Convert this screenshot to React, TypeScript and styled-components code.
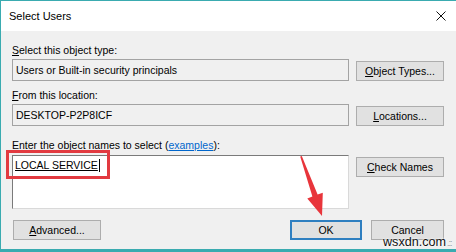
import React from "react";
import styled, { createGlobalStyle } from "styled-components";

const Global = createGlobalStyle`
  html, body { margin: 0; padding: 0; background: #f0f0f0; }
  body { width: 456px; height: 252px; overflow: hidden; }
`;

const Window = styled.div`
  position: relative;
  width: 456px;
  height: 252px;
  box-sizing: border-box;
  border-left: 1px solid #3aabb0;
  border-top: 1px solid #3aabb0;
  background: #f0f0f0;
  display: flex;
  flex-direction: column;
  font-family: "Liberation Sans", Arial, sans-serif;
  font-size: 10.5px;
  color: #000;
  overflow: hidden;
`;

const TitleBar = styled.div`
  flex: none;
  height: 30px;
  background: #fff;
  display: flex;
  align-items: center;
  justify-content: space-between;
  padding: 0 10px 0 8px;
`;

const Title = styled.span`
  font-size: 11px;
`;

const Body = styled.div`
  display: flex;
  flex-direction: column;
  padding: 12px 12px 0 11px;
`;

const Label = styled.div<{ $gap?: number }>`
  height: 14px;
  line-height: 14px;
  margin-top: ${(p) => p.$gap ?? 0}px;
  white-space: nowrap;
`;

const FieldRow = styled.div`
  display: grid;
  grid-template-columns: 337px 88px;
  column-gap: 7px;
  margin-top: 2px;
  align-items: start;
`;

const TextRow = styled(FieldRow)`
  margin-top: 3px;
`;

const ReadBox = styled.div`
  height: 22px;
  box-sizing: border-box;
  border: 1px solid #a3a3a3;
  background: #f0f0f0;
  padding-left: 3px;
  display: flex;
  align-items: center;
  white-space: nowrap;
`;

const NamesBox = styled.div`
  height: 54px;
  box-sizing: border-box;
  border-top: 1px solid #7a7a7a;
  border-left: 1px solid #7a7a7a;
  border-right: 1px solid #d9d9d9;
  border-bottom: 1px solid #d9d9d9;
  background: #fff;
  padding: 3px 0 0 2px;
  line-height: 13px;
  display: flex;
  align-items: flex-start;
`;

const Resolved = styled.span`
  text-decoration: underline;
`;

const Caret = styled.span`
  display: inline-block;
  width: 1px;
  height: 13px;
  background: #000;
  margin-left: 1px;
`;

const Button = styled.div<{ $w?: number; $default?: boolean }>`
  width: ${(p) => (p.$w ? `${p.$w}px` : "auto")};
  height: 20px;
  margin-top: 2px;
  box-sizing: border-box;
  background: #e1e1e1;
  border: ${(p) => (p.$default ? "2px solid #2f7fc0" : "1px solid #adadad")};
  display: flex;
  align-items: center;
  justify-content: center;
  white-space: nowrap;
`;

const Footer = styled.div`
  display: flex;
  justify-content: space-between;
  margin-top: 9px;
  padding-left: 1px;
`;

const FooterGroup = styled.div`
  display: flex;
  gap: 9px;
`;

const Link = styled.span`
  color: #0066cc;
  text-decoration: underline;
`;

const BottomEdge = styled.div`
  margin-top: auto;
  height: 3px;
  background: #3aabb0;
`;

const Highlight = styled.div`
  position: absolute;
  left: 5px;
  top: 149px;
  width: 104px;
  height: 29px;
  box-sizing: border-box;
  border: 3px solid #e23a40;
`;

const Overlay = styled.svg`
  position: absolute;
  left: -1px;
  top: -1px;
  pointer-events: none;
`;

const Watermark = styled.div`
  position: absolute;
  left: 382px;
  top: 234px;
  font-size: 12.6px;
  line-height: 15px;
  color: #111;
  text-shadow: 0 0 2px #fff, 0 0 2px #fff;
  white-space: nowrap;
`;

const Grip = styled.span`
  color: #9a9a9a;
  font-size: 9px;
  margin-left: 1px;
  letter-spacing: -1px;
`;

export default function App() {
  return (
    <>
      <Global />
      <Window>
        <TitleBar>
          <Title>Select Users</Title>
          <svg width="10" height="10" viewBox="0 0 10 10">
            <path d="M0.5 0.5 L9.5 9.5 M9.5 0.5 L0.5 9.5" stroke="#111" strokeWidth="1" fill="none" />
          </svg>
        </TitleBar>
        <Body>
          <Label>
            <u>S</u>elect this object type:
          </Label>
          <FieldRow>
            <ReadBox>Users or Built-in security principals</ReadBox>
            <Button>
              <u>O</u>bject Types...
            </Button>
          </FieldRow>
          <Label $gap={7}>
            <u>F</u>rom this location:
          </Label>
          <FieldRow>
            <ReadBox>DESKTOP-P2P8ICF</ReadBox>
            <Button>
              <u>L</u>ocations...
            </Button>
          </FieldRow>
          <Label $gap={12}>
            <u>E</u>nter the object names to select (<Link>examples</Link>):
          </Label>
          <TextRow>
            <NamesBox>
              <Resolved>LOCAL SERVICE</Resolved>
              <Caret />
            </NamesBox>
            <Button>
              <u>C</u>heck Names
            </Button>
          </TextRow>
          <Footer>
            <Button $w={88}>
              <u>A</u>dvanced...
            </Button>
            <FooterGroup>
              <Button $w={72} $default>
                OK
              </Button>
              <Button $w={73}>Cancel</Button>
            </FooterGroup>
          </Footer>
        </Body>
        <BottomEdge />
        <Highlight />
        <Overlay width="456" height="252" viewBox="0 0 456 252">
          <polygon
            points="301.8,156 317.6,194.6 322.8,192.7 322,216 307.3,198.4 312.4,196.5 300.2,156.5"
            fill="#e8353b"
          />
        </Overlay>
        <Watermark>
          wsxdn.com<Grip>.::</Grip>
        </Watermark>
      </Window>
    </>
  );
}
